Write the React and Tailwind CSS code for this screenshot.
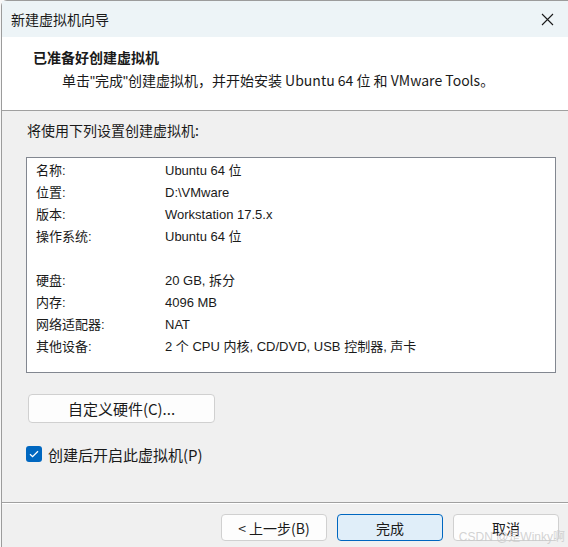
import React from 'react';

const rows = [
  ['名称:', 'Ubuntu 64 位'],
  ['位置:', 'D:\\VMware'],
  ['版本:', 'Workstation 17.5.x'],
  ['操作系统:', 'Ubuntu 64 位'],
  null,
  ['硬盘:', '20 GB, 拆分'],
  ['内存:', '4096 MB'],
  ['网络适配器:', 'NAT'],
  ['其他设备:', '2 个 CPU 内核, CD/DVD, USB 控制器, 声卡'],
];

const ui = "font-['Noto_Sans_CJK_SC','Liberation_Sans',sans-serif]";
const list = "font-['Liberation_Sans','Noto_Sans_CJK_SC',sans-serif]";

function Btn({ children, primary }) {
  return (
    <button
      className={
        'w-[106px] h-[27px] rounded-[4px] border text-[14px] leading-none text-[#1a1a1a] flex items-center justify-center ' +
        (primary ? 'bg-[#e0eef9] border-[#0067c0]' : 'bg-[#fdfdfd] border-[#d0d0d0]')
      }
    >
      {children}
    </button>
  );
}

export default function App() {
  return (
    <div className={'w-[568px] h-[547px] flex bg-[#f7f7f7] text-[#1a1a1a] relative overflow-hidden ' + ui}>
      <div className="w-[1px] shrink-0" />
      <div className="flex-1 flex flex-col border-l border-t border-[#9c9c9c] rounded-tl-[6px] bg-[#f0f0f0]">
        {/* Title bar */}
        <div className="h-[36px] bg-[#edf4f7] flex items-center justify-between pl-[9px] pr-[14px]">
          <span className="text-[14px] leading-none">新建虚拟机向导</span>
          <svg width="13" height="13" viewBox="0 0 13 13" stroke="#1a1a1a" strokeWidth="1.1">
            <path d="M1 1l11 11M12 1L1 12" />
          </svg>
        </div>

        {/* Header */}
        <div className="h-[74px] bg-white border-b border-[#a0a0a0] pl-[31px] pt-[10px]">
          <div className="text-[14px] font-bold leading-[20px]">已准备好创建虚拟机</div>
          <div className="text-[14px] leading-[20px] mt-[3px] pl-[29px]">
            单击<span className="font-['Liberation_Sans']">"</span>完成<span className="font-['Liberation_Sans']">"</span>创建虚拟机，并开始安装 Ubuntu 64 位 和 VMware Tools。
          </div>
        </div>

        {/* Body */}
        <div className="flex-1 flex flex-col pl-[24px]">
          <div className="text-[14px] leading-[20px] pt-[9px] pl-[1px]">将使用下列设置创建虚拟机:</div>

          <div className="mt-[17px] w-[530px] h-[216px] bg-white border border-[#828790] pt-[2px] pl-[9px]">
            {rows.map((r, i) =>
              r ? (
                <div key={i} className={'flex h-[22px] items-center text-[13px] ' + list}>
                  <span className="w-[129px] shrink-0">{r[0]}</span>
                  <span>{r[1]}</span>
                </div>
              ) : (
                <div key={i} className="h-[22px]" />
              )
            )}
          </div>

          <button className="mt-[21px] ml-[2px] w-[187px] h-[29px] rounded-[4px] border border-[#d0d0d0] bg-[#fdfdfd] text-[15px] leading-none flex items-center justify-center">
            自定义硬件(C)...
          </button>

          <label className="mt-[23px] flex items-center gap-[6px]">
            <span className="w-[16px] h-[16px] rounded-[3px] bg-[#0067c0] flex items-center justify-center">
              <svg width="10" height="8" viewBox="0 0 10 8" fill="none" stroke="white" strokeWidth="1.3">
                <path d="M1 4.2l2.6 2.5L9 1.2" />
              </svg>
            </span>
            <span className="text-[15px] leading-none">创建后开启此虚拟机(P)</span>
          </label>
        </div>

        {/* Footer */}
        <div className="h-[45px] border-t border-[#a0a0a0] shadow-[inset_0_1px_0_#ffffff] flex items-start justify-end gap-[10px] pr-[9px] pt-[11px]">
          <Btn>&lt; 上一步(B)</Btn>
          <Btn primary>完成</Btn>
          <Btn>取消</Btn>
        </div>
      </div>

      <span className="absolute right-[3px] bottom-[4px] text-[12px] leading-none text-[#c8c8c8]/80 font-['Liberation_Sans','Noto_Sans_CJK_SC',sans-serif]">
        CSDN @是Winky啊
      </span>
    </div>
  );
}
